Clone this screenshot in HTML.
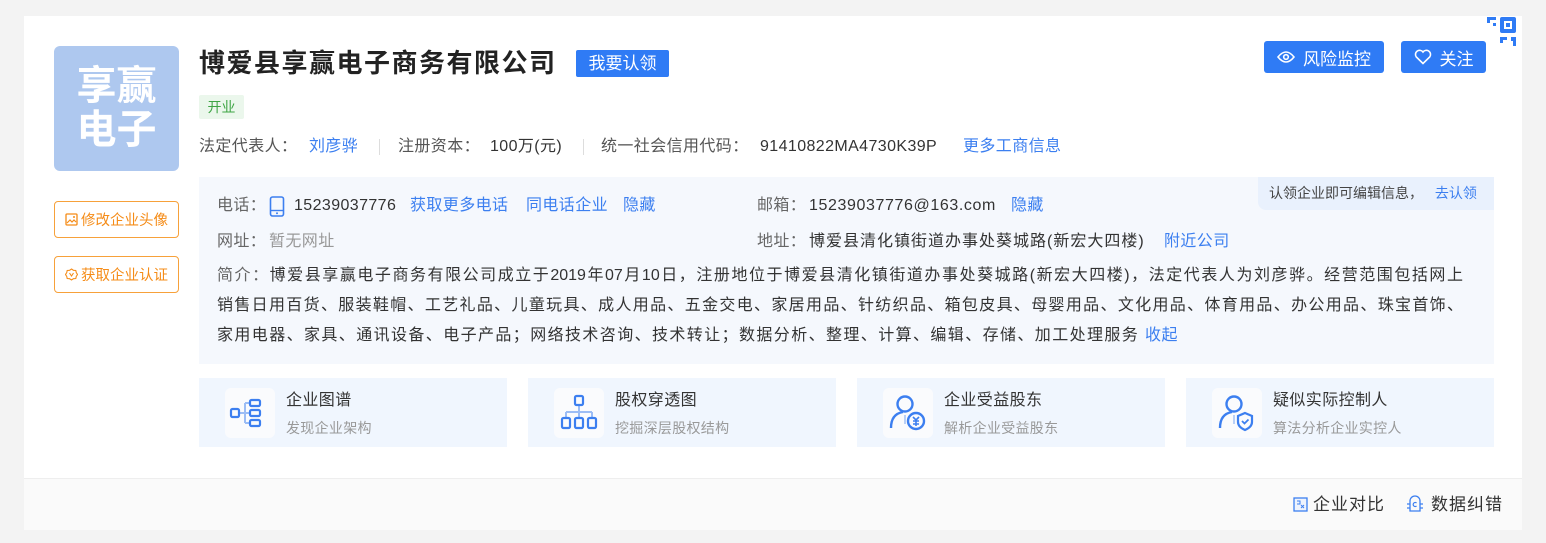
<!DOCTYPE html>
<html><head><meta charset="utf-8"><style>
*{margin:0;padding:0;box-sizing:border-box}
body{width:1546px;height:543px;background:#f3f3f3;font-family:"Liberation Sans","Noto Sans CJK SC",sans-serif;color:#333;position:relative;overflow:hidden}
.card{position:absolute;left:24px;top:16px;width:1498px;height:514px;background:#fff}
.a{position:absolute;white-space:nowrap}
.blue{color:#3c7ff0}
.gray{color:#999}
.lab{color:#666}
.btn{position:absolute;background:#2f7bf5;color:#fff;border-radius:3px;font-size:17px;display:flex;align-items:center;justify-content:center;gap:8px}
.obtn{position:absolute;left:54px;width:125px;height:37px;border:1px solid #f7a13a;border-radius:4px;color:#f58c18;font-size:14.5px;display:flex;align-items:center;justify-content:center;gap:3px}
.tile{position:absolute;top:378px;width:308px;height:69px;background:#f0f6fe}
.tile .ic{position:absolute;left:26px;top:10px;width:50px;height:50px;background:#fafbfd;border-radius:6px}
.tile .t{position:absolute;left:87px;top:8px;font-size:16px;color:#333;letter-spacing:.4px}
.tile .s{position:absolute;left:87px;top:40px;font-size:14px;color:#999;letter-spacing:.3px}
.r{position:absolute;white-space:nowrap;font-size:16px;line-height:22px;letter-spacing:.4px}
.jl{position:absolute;left:217px;width:1246px;font-size:16px;line-height:30px;color:#333;text-align:justify;text-align-last:justify;text-justify:inter-character;white-space:nowrap}
</style></head><body>
<div class="card">
<div style="position:absolute;left:0;top:462px;width:1498px;height:52px;background:#fafafa;border-top:1px solid #eee"></div>
</div>
<div class="a" style="left:54px;top:46px;width:125px;height:125px;background:#aec8ef;border-radius:6px;color:#fff;font-weight:bold;font-size:40px;line-height:44px;text-align:center;padding-top:18px">享赢<br>电子</div>
<div class="obtn" style="top:201px"><svg width="13" height="13" viewBox="0 0 13 13"><rect x="1" y="1" width="11" height="11" rx="1" fill="none" stroke="#f58c18" stroke-width="1.3"/><path d="M2 10l3-3 2 2 2-2 2 2" fill="none" stroke="#f58c18" stroke-width="1.2"/><circle cx="9" cy="4" r="1" fill="#f58c18"/></svg>修改企业头像</div>
<div class="obtn" style="top:256px"><svg width="13" height="13" viewBox="0 0 13 13"><path d="M6.5 1l2 1.3 2.3.2.5 2.2 1.2 1.8-1.2 1.8-.5 2.2-2.3.2-2 1.3-2-1.3-2.3-.2-.5-2.2L.5 6.5l1.2-1.8.5-2.2 2.3-.2z" fill="none" stroke="#f58c18" stroke-width="1.1"/><path d="M4.5 5l2 3 2-3" fill="none" stroke="#f58c18" stroke-width="1.1"/></svg>获取企业认证</div>

<div class="a" style="left:199px;top:45px;font-size:26px;font-weight:bold;color:#222;line-height:36px;letter-spacing:1.5px">博爱县享赢电子商务有限公司</div>
<div class="a" style="left:576px;top:50px;width:93px;height:27px;background:#2f7bf5;color:#fff;font-size:17px;line-height:27px;text-align:center;border-radius:2px">我要认领</div>
<div class="a" style="left:199px;top:95px;width:45px;height:24px;background:#ebf7ec;color:#3ea544;font-size:14px;line-height:24px;text-align:center;border-radius:2px">开业</div>

<div class="r" style="left:199px;top:136px;color:#555">法定代表人：</div>
<div class="r blue" style="left:309px;top:136px">刘彦骅</div>
<div class="a" style="left:379px;top:139px;width:1px;height:16px;background:#ddd"></div>
<div class="r" style="left:398px;top:136px;color:#555">注册资本：</div>
<div class="r" style="left:490px;top:136px">100万(元)</div>
<div class="a" style="left:583px;top:139px;width:1px;height:16px;background:#ddd"></div>
<div class="r" style="left:601px;top:136px;color:#555">统一社会信用代码：</div>
<div class="r" style="left:760px;top:136px">91410822MA4730K39P</div>
<div class="r blue" style="left:963px;top:136px">更多工商信息</div>

<div class="btn" style="left:1264px;top:41px;width:120px;height:32px"><svg width="18" height="14" viewBox="0 0 18 14"><path d="M1 7Q9-3 17 7Q9 17 1 7z" fill="none" stroke="#fff" stroke-width="1.6"/><circle cx="9" cy="7" r="2.3" fill="none" stroke="#fff" stroke-width="1.6"/></svg>风险监控</div>
<div class="btn" style="left:1401px;top:41px;width:85px;height:32px"><svg width="18" height="16" viewBox="0 0 18 16"><path d="M9 14.5L2.3 8A3.9 3.9 0 019 3a3.9 3.9 0 016.7 5z" fill="none" stroke="#fff" stroke-width="1.6"/></svg>关注</div>
<svg class="a" style="left:1487px;top:17px" width="29" height="29" viewBox="0 0 29 29"><path d="M0 0h9v3H3v3H0z M6 6h3v3H6z" fill="#2f7bf5"/><rect x="13" y="0" width="16" height="16" rx="2" fill="#2f7bf5"/><rect x="17" y="4" width="8" height="8" fill="#fff"/><rect x="19" y="6" width="4" height="4" fill="#2f7bf5"/><path d="M13 20h7v3h-4v3h-3z M24 20h5v9h-3v-5h-2z" fill="#2f7bf5"/></svg>

<div class="a" style="left:199px;top:177px;width:1295px;height:187px;background:#f5f8fd"></div>
<div class="a" style="left:1258px;top:177px;width:236px;height:33px;background:#e9f1fd;border-radius:0 0 0 8px;font-size:14px;line-height:33px;padding-left:11px;color:#444">认领企业即可编辑信息， <span class="blue" style="margin-left:8px">去认领</span></div>

<div class="r lab" style="left:217px;top:195px">电话：</div>
<svg class="a" style="left:269px;top:196px" width="16" height="21" viewBox="0 0 16 21"><rect x="1.5" y="1" width="13" height="19" rx="2" fill="none" stroke="#3c7ff0" stroke-width="1.6"/><path d="M1.5 14.5h13" stroke="#3c7ff0" stroke-width="1.4"/><circle cx="8" cy="17.3" r="1" fill="#3c7ff0"/></svg>
<div class="r" style="left:294px;top:195px">15239037776</div>
<div class="r blue" style="left:410px;top:195px">获取更多电话</div>
<div class="r blue" style="left:526px;top:195px">同电话企业</div>
<div class="r blue" style="left:623px;top:195px">隐藏</div>
<div class="r lab" style="left:757px;top:195px">邮箱：</div>
<div class="r" style="left:809px;top:195px;letter-spacing:.6px">15239037776@163.com</div>
<div class="r blue" style="left:1011px;top:195px">隐藏</div>
<div class="r lab" style="left:217px;top:231px">网址：</div>
<div class="r gray" style="left:269px;top:231px">暂无网址</div>
<div class="r lab" style="left:757px;top:231px">地址：</div>
<div class="r" style="left:809px;top:231px;letter-spacing:1px">博爱县清化镇街道办事处葵城路(新宏大四楼)</div>
<div class="r blue" style="left:1164px;top:231px">附近公司</div>
<div class="jl" style="top:261px"><span class="lab">简介：</span>博爱县享赢电子商务有限公司成立于2019年07月10日，注册地位于博爱县清化镇街道办事处葵城路(新宏大四楼)，法定代表人为刘彦骅。经营范围包括网上</div>
<div class="jl" style="top:291px">销售日用百货、服装鞋帽、工艺礼品、儿童玩具、成人用品、五金交电、家居用品、针纺织品、箱包皮具、母婴用品、文化用品、体育用品、办公用品、珠宝首饰、</div>
<div class="a" style="left:217px;top:321px;font-size:16px;line-height:30px;letter-spacing:1.4px">家用电器、家具、通讯设备、电子产品；网络技术咨询、技术转让；数据分析、整理、计算、编辑、存储、加工处理服务 <span class="blue" style="letter-spacing:.4px">收起</span></div>

<div class="tile" style="left:199px"><div class="ic"><svg width="50" height="50" viewBox="0 0 50 50"><path d="M14 25h6M20 15v20M20 15h5M20 25h5M20 35h5" stroke="#9cbdf5" stroke-width="2" fill="none"/><rect x="6" y="21" width="8" height="8" rx="1.5" fill="none" stroke="#3c7ff0" stroke-width="2.2"/><rect x="25" y="12" width="10" height="6" rx="1.5" fill="none" stroke="#3c7ff0" stroke-width="2.2"/><rect x="25" y="22" width="10" height="6" rx="1.5" fill="none" stroke="#3c7ff0" stroke-width="2.2"/><rect x="25" y="32" width="10" height="6" rx="1.5" fill="none" stroke="#3c7ff0" stroke-width="2.2"/></svg></div><div class="t">企业图谱</div><div class="s">发现企业架构</div></div>
<div class="tile" style="left:528px"><div class="ic"><svg width="50" height="50" viewBox="0 0 50 50"><path d="M25 17v7M12 24h26M12 24v6M25 24v6M38 24v6" stroke="#9cbdf5" stroke-width="2" fill="none"/><rect x="21" y="8" width="8" height="9" rx="1.5" fill="none" stroke="#3c7ff0" stroke-width="2.2"/><rect x="8" y="30" width="8" height="10" rx="1.5" fill="none" stroke="#3c7ff0" stroke-width="2.2"/><rect x="21" y="30" width="8" height="10" rx="1.5" fill="none" stroke="#3c7ff0" stroke-width="2.2"/><rect x="34" y="30" width="8" height="10" rx="1.5" fill="none" stroke="#3c7ff0" stroke-width="2.2"/></svg></div><div class="t">股权穿透图</div><div class="s">挖掘深层股权结构</div></div>
<div class="tile" style="left:857px"><div class="ic"><svg width="50" height="50" viewBox="0 0 50 50"><circle cx="22" cy="16" r="7.5" fill="none" stroke="#3c7ff0" stroke-width="2.4"/><path d="M8 40q0-14 12-16" fill="none" stroke="#3c7ff0" stroke-width="2.4"/><path d="M22 27v9" stroke="#b9d0f7" stroke-width="2"/><circle cx="33" cy="33" r="8" fill="none" stroke="#3c7ff0" stroke-width="2.4"/><path d="M30 29l3 3 3-3M33 32v6M30 33h6M30 36h6" stroke="#3c7ff0" stroke-width="1.6" fill="none"/></svg></div><div class="t">企业受益股东</div><div class="s">解析企业受益股东</div></div>
<div class="tile" style="left:1186px"><div class="ic"><svg width="50" height="50" viewBox="0 0 50 50"><circle cx="22" cy="16" r="7.5" fill="none" stroke="#3c7ff0" stroke-width="2.4"/><path d="M8 40q0-14 12-16" fill="none" stroke="#3c7ff0" stroke-width="2.4"/><path d="M22 27v9" stroke="#b9d0f7" stroke-width="2"/><path d="M33 25l7 3v6q0 5-7 8q-7-3-7-8v-6z" fill="none" stroke="#3c7ff0" stroke-width="2.2"/><path d="M30 33l2.5 2.5 4-4" fill="none" stroke="#3c7ff0" stroke-width="1.8"/></svg></div><div class="t">疑似实际控制人</div><div class="s">算法分析企业实控人</div></div>

<svg class="a" style="left:1293px;top:497px" width="15" height="15" viewBox="0 0 15 15"><rect x="1" y="1" width="13" height="13" fill="#eef3fd" stroke="#3c7ff0" stroke-width="1.3"/><path d="M4 4h3v3H4M8 8l3 3M11 8l-3 3" stroke="#3c7ff0" stroke-width="1" fill="none"/></svg>
<div class="a" style="left:1313px;top:493px;font-size:17px;line-height:24px;letter-spacing:1px">企业对比</div>
<svg class="a" style="left:1406px;top:495px" width="18" height="17" viewBox="0 0 18 17"><path d="M4 16V6a5 5 0 0110 0v10z" fill="none" stroke="#3c7ff0" stroke-width="1.3"/><path d="M1 9h3M14 9h3M1 13h3M14 13h3" stroke="#3c7ff0" stroke-width="1.2"/><path d="M10.5 8a2 2 0 100 3" fill="none" stroke="#3c7ff0" stroke-width="1.2"/></svg>
<div class="a" style="left:1431px;top:493px;font-size:17px;line-height:24px;letter-spacing:1px">数据纠错</div>
</body></html>
